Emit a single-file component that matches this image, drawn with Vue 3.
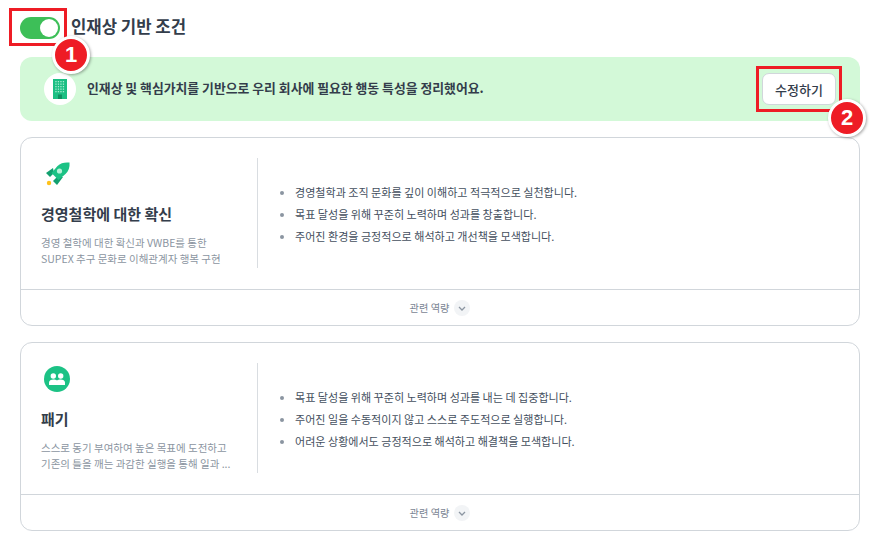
<script setup>
const cards = [
  {
    title: '경영철학에 대한 확신',
    icon: 'rocket',
    desc: ['경영 철학에 대한 확신과 VWBE를 통한', 'SUPEX 추구 문화로 이해관계자 행복 구현'],
    items: [
      '경영철학과 조직 문화를 깊이 이해하고 적극적으로 실천합니다.',
      '목표 달성을 위해 꾸준히 노력하며 성과를 창출합니다.',
      '주어진 환경을 긍정적으로 해석하고 개선책을 모색합니다.'
    ]
  },
  {
    title: '패기',
    icon: 'people',
    desc: ['스스로 동기 부여하여 높은 목표에 도전하고', '기존의 틀을 깨는 과감한 실행을 통해 일과 ...'],
    items: [
      '목표 달성을 위해 꾸준히 노력하며 성과를 내는 데 집중합니다.',
      '주어진 일을 수동적이지 않고 스스로 주도적으로 실행합니다.',
      '어려운 상황에서도 긍정적으로 해석하고 해결책을 모색합니다.'
    ]
  }
]
</script>

<template>
  <div class="page">
    <header class="head">
      <span class="toggle"><span class="knob"></span></span>
      <h1 class="head-title">인재상 기반 조건</h1>
      <span class="mark mark-one"></span>
      <span class="badge badge-one">1</span>
    </header>

    <section class="banner">
      <span class="banner-icon">
        <svg width="14" height="20" viewBox="0 0 14 20">
          <rect width="14" height="20" fill="#1bbf83" />
          <g fill="#a8ecd0">
            <rect v-for="n in 20" :key="n" :x="2.3 + ((n - 1) % 4) * 2.5" :y="2 + Math.floor((n - 1) / 4) * 2.5" width="1.3" height="1.3" />
          </g>
          <rect x="5" y="15.5" width="4" height="4.5" fill="#0e8f60" />
        </svg>
      </span>
      <p class="banner-text">인재상 및 핵심가치를 기반으로 우리 회사에 필요한 행동 특성을 정리했어요.</p>
      <button class="edit">수정하기</button>
      <span class="mark mark-two"></span>
      <span class="badge badge-two">2</span>
    </section>

    <article v-for="card in cards" :key="card.title" class="card">
      <div class="card-body">
        <div class="intro">
          <svg v-if="card.icon === 'rocket'" class="icon" width="28" height="28" viewBox="0 0 28 28">
            <circle cx="5" cy="25" r="2.200" fill="#ffc21c" />
            <path d="M9 10L2 15l4 4 4-4z" fill="#12a06f" />
            <path d="M19 19l-6 8-4-4 4-4z" fill="#12a06f" />
            <path d="M25.500 4.500c-5-.5-9 .5-12 3.500L7.500 15l7 7 7-6c3-3 4.500-6.500 4-11.500z" fill="#1cc285" />
            <circle cx="15.500" cy="13" r="2.600" fill="#b8f2d9" />
          </svg>
          <span v-else class="icon-round">
            <svg width="16" height="12" viewBox="0 0 16 12">
              <circle cx="4.300" cy="3" r="2.700" fill="#fff" />
              <circle cx="11.700" cy="3" r="2.700" fill="#fff" />
              <path d="M0 12V9.500C0 7.500 2 6.500 4.300 6.500c1.500 0 2.800.3 3.700 1 .9-.7 2.200-1 3.700-1 2.300 0 4.300 1 4.300 3V12z" fill="#fff" />
            </svg>
          </span>
          <h2 class="card-title">{{ card.title }}</h2>
          <p class="desc"><span v-for="line in card.desc" :key="line">{{ line }}</span></p>
        </div>
        <ul class="list">
          <li v-for="item in card.items" :key="item">{{ item }}</li>
        </ul>
      </div>
      <footer class="card-foot">
        <span class="foot-label">관련 역량</span>
        <span class="chevron">
          <svg width="8" height="5" viewBox="0 0 8 5"><path d="M1 1l3 3 3-3" fill="none" stroke="#8b95a1" stroke-width="1.300" /></svg>
        </span>
      </footer>
    </article>
  </div>
</template>

<style>
html, body { background: #fff; }
</style>

<style scoped>
.page {
  box-sizing: border-box;
  width: 883px;
  height: 551px;
  padding: 15px 23px 0 20px;
  overflow: hidden;
  font-family: "Noto Sans CJK KR", "Noto Sans", sans-serif;
  color: #333d4b;
}
.head {
  position: relative;
  z-index: 2;
  display: flex;
  align-items: center;
  gap: 11px;
  height: 24px;
  margin-bottom: 18px;
}
.toggle {
  display: flex;
  justify-content: flex-end;
  align-items: center;
  box-sizing: border-box;
  width: 40px;
  height: 22px;
  margin-top: 1px;
  padding-right: 2px;
  border-radius: 11px;
  background: #3dbf58;
}
.knob {
  width: 18px;
  height: 18px;
  border-radius: 50%;
  background: #fff;
}
.head-title {
  margin: -2px 0 0;
  font-size: 16.700px;
  font-weight: 700;
  line-height: 24px;
}
.mark {
  position: absolute;
  box-sizing: border-box;
  border: 3px solid #ee1c25;
}
.mark-one { left: -11px; top: -7px; width: 58px; height: 38px; }
.mark-two { right: 18px; top: 9px; width: 86px; height: 46px; }
.badge {
  position: absolute;
  display: flex;
  align-items: center;
  justify-content: center;
  box-sizing: border-box;
  width: 38px;
  height: 38px;
  border: 3px solid #fff;
  border-radius: 50%;
  background: #ee1c25;
  color: #fff;
  font-family: "Liberation Sans", sans-serif;
  font-size: 22px;
  font-weight: 700;
  box-shadow: 1px 1px 3px rgba(0, 0, 0, 0.35);
}
.badge-one { left: 32px; top: 21px; }
.badge-two { right: -6px; top: 42px; }
.banner {
  position: relative;
  z-index: 1;
  display: flex;
  align-items: center;
  height: 64px;
  margin-bottom: 16px;
  padding: 0 24px 0 24px;
  border-radius: 12px;
  background: #d3f9d8;
}
.banner-icon {
  display: flex;
  align-items: center;
  justify-content: center;
  width: 32px;
  height: 32px;
  border-radius: 50%;
  background: #fff;
}
.banner-text {
  flex: 1;
  margin: -3px 0 0 11px;
  font-size: 12.850px;
  font-weight: 700;
}
.edit {
  width: 74px;
  height: 32px;
  border: 1px solid #d1d6db;
  border-radius: 7px;
  background: #fff;
  color: #333d4b;
  font: 500 13px "Noto Sans CJK KR", sans-serif;
}
.card {
  box-sizing: border-box;
  height: 189px;
  margin-bottom: 16px;
  border: 1px solid #d1d6db;
  border-radius: 12px;
  background: #fff;
}
.card-body {
  box-sizing: border-box;
  display: flex;
  align-items: flex-start;
  height: 151px;
  padding-top: 20px;
}
.intro {
  box-sizing: border-box;
  width: 237px;
  height: 110px;
  padding-left: 20px;
  border-right: 1px solid #d9dde1;
}
.icon { display: block; margin-left: 3px; }
.icon-round {
  display: flex;
  align-items: center;
  justify-content: center;
  width: 26px;
  height: 26px;
  margin: 3px 0 -1px 3px;
  border-radius: 50%;
  background: #1cc285;
}
.card-title {
  margin: 17px 0 10px;
  font-size: 15px;
  font-weight: 700;
  line-height: 22px;
}
.desc {
  margin: 0;
  font-size: 10.500px;
  line-height: 16px;
  color: #8b95a1;
}
.desc span { display: block; white-space: nowrap; }
.list {
  margin: 23px 0 0;
  padding: 0 0 0 37px;
  font-size: 11.050px;
  line-height: 22px;
  color: #444f5e;
}
.list li::marker { color: #8b95a1; }
.card-foot {
  display: flex;
  align-items: center;
  justify-content: center;
  gap: 5px;
  height: 36px;
  border-top: 1px solid #d1d6db;
  font-size: 10.200px;
  color: #7b8594;
}
.foot-label { margin-top: -2px; }
.chevron {
  display: flex;
  align-items: center;
  justify-content: center;
  width: 16px;
  height: 16px;
  border-radius: 50%;
  background: #f2f4f6;
}
</style>
